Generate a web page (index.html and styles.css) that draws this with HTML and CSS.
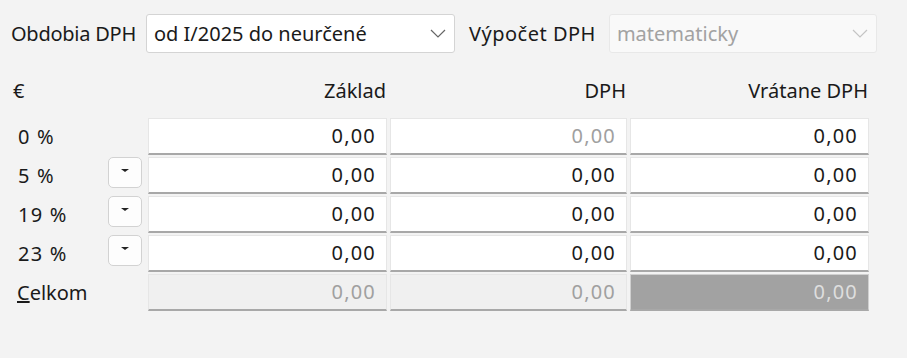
FILE: index.html
```html
<html lang="sk">
    <head>
        <title>DPH</title>
        <meta charset="UTF-8" />
        <link rel="stylesheet" href="styles.css">
    </head>

    <body>
        <div class="panel">
            <div class="top">
                <label class="caption">Obdobia DPH</label>
                <div class="select period">
                    <span>od I/2025 do neurčené</span>
                    <svg class="chevron" width="16" height="9" viewBox="0 0 16 9"><path d="M1 1 L8 8 L15 1" fill="none" stroke="#666" stroke-width="1.2"/></svg>
                </div>
                <label class="caption calc-caption">Výpočet DPH</label>
                <div class="select calc disabled">
                    <span>matematicky</span>
                    <svg class="chevron" width="16" height="9" viewBox="0 0 16 9"><path d="M1 1 L8 8 L15 1" fill="none" stroke="#c4c4c4" stroke-width="1.2"/></svg>
                </div>
            </div>

            <div class="grid">
                <div class="head label">€</div>
                <div class="head"></div>
                <div class="head num">Základ</div>
                <div class="head num">DPH</div>
                <div class="head num">Vrátane DPH</div>

                <div class="label rate">0 %</div>
                <div></div>
                <div class="cell">0,00</div>
                <div class="cell muted">0,00</div>
                <div class="cell">0,00</div>

                <div class="label rate">5 %</div>
                <div><button class="pick"><span class="tri"></span></button></div>
                <div class="cell">0,00</div>
                <div class="cell">0,00</div>
                <div class="cell">0,00</div>

                <div class="label rate">19 %</div>
                <div><button class="pick"><span class="tri"></span></button></div>
                <div class="cell">0,00</div>
                <div class="cell">0,00</div>
                <div class="cell">0,00</div>

                <div class="label rate">23 %</div>
                <div><button class="pick"><span class="tri"></span></button></div>
                <div class="cell">0,00</div>
                <div class="cell">0,00</div>
                <div class="cell">0,00</div>

                <div class="label"><u>C</u>elkom</div>
                <div></div>
                <div class="cell total">0,00</div>
                <div class="cell total">0,00</div>
                <div class="cell total dark">0,00</div>
            </div>
        </div>
    </body>
</html>
```

FILE: styles.css
```css
html {
    background: #f3f3f3;
}

body {
    margin: 0;
    font-family: "Noto Sans", sans-serif;
    font-size: 20px;
    color: #1a1a1a;
}

.panel {
    padding: 14px 0 0 11px;
}

.top {
    display: flex;
    align-items: center;
    height: 39px;
}

.caption {
    margin-right: 10px;
    letter-spacing: -0.25px;
}

.calc-caption {
    letter-spacing: 0.5px;
    margin-right: 13px;
}

.select {
    box-sizing: border-box;
    height: 39px;
    display: flex;
    align-items: center;
    justify-content: space-between;
    padding: 0 8px 0 7px;
    background: #fff;
    border: 1px solid #d4d4d4;
    border-radius: 3px;
}

.period {
    width: 309px;
    margin-right: 14px;
}

.calc {
    width: 268px;
}

.select.disabled {
    background: #f9f9f9;
    border-color: #e8e8e8;
    color: #a2a2a2;
}

.grid {
    display: grid;
    grid-template-columns: 94px 37px 239px 237px 239px;
    column-gap: 3px;
    row-gap: 2px;
    grid-auto-rows: 37px;
    margin-top: 26px;
}

.head {
    height: 24px;
    line-height: 24px;
    align-self: start;
}

.num {
    text-align: right;
    padding-right: 1px;
}

.label {
    display: flex;
    align-items: center;
    padding-left: 6px;
}

.rate {
    letter-spacing: 1.2px;
    padding-left: 7px;
}

.head.label {
    display: block;
    padding-left: 2px;
}

.cell {
    box-sizing: border-box;
    background: #fff;
    border: 1px solid #e6e6e6;
    border-bottom: 2px solid #a8a8a8;
    text-align: right;
    padding-right: 10px;
    line-height: 34px;
    letter-spacing: 1.2px;
}

.muted {
    color: #a0a0a0;
}

.total {
    background: #f0f0f0;
    color: #a0a0a0;
}

.total.dark {
    background: #a2a2a2;
    border-color: #d0d0d0;
    border-bottom-color: #a8a8a8;
    color: #dedede;
}

.pick {
    width: 34px;
    height: 31px;
    padding: 0;
    background: #fdfdfd;
    border: 1px solid #d2d2d2;
    border-radius: 5px;
    display: flex;
    justify-content: center;
    align-items: center;
}

.tri {
    width: 0;
    height: 0;
    margin-top: -4px;
    border-left: 4px solid transparent;
    border-right: 4px solid transparent;
    border-top: 3px solid #222;
}
```
